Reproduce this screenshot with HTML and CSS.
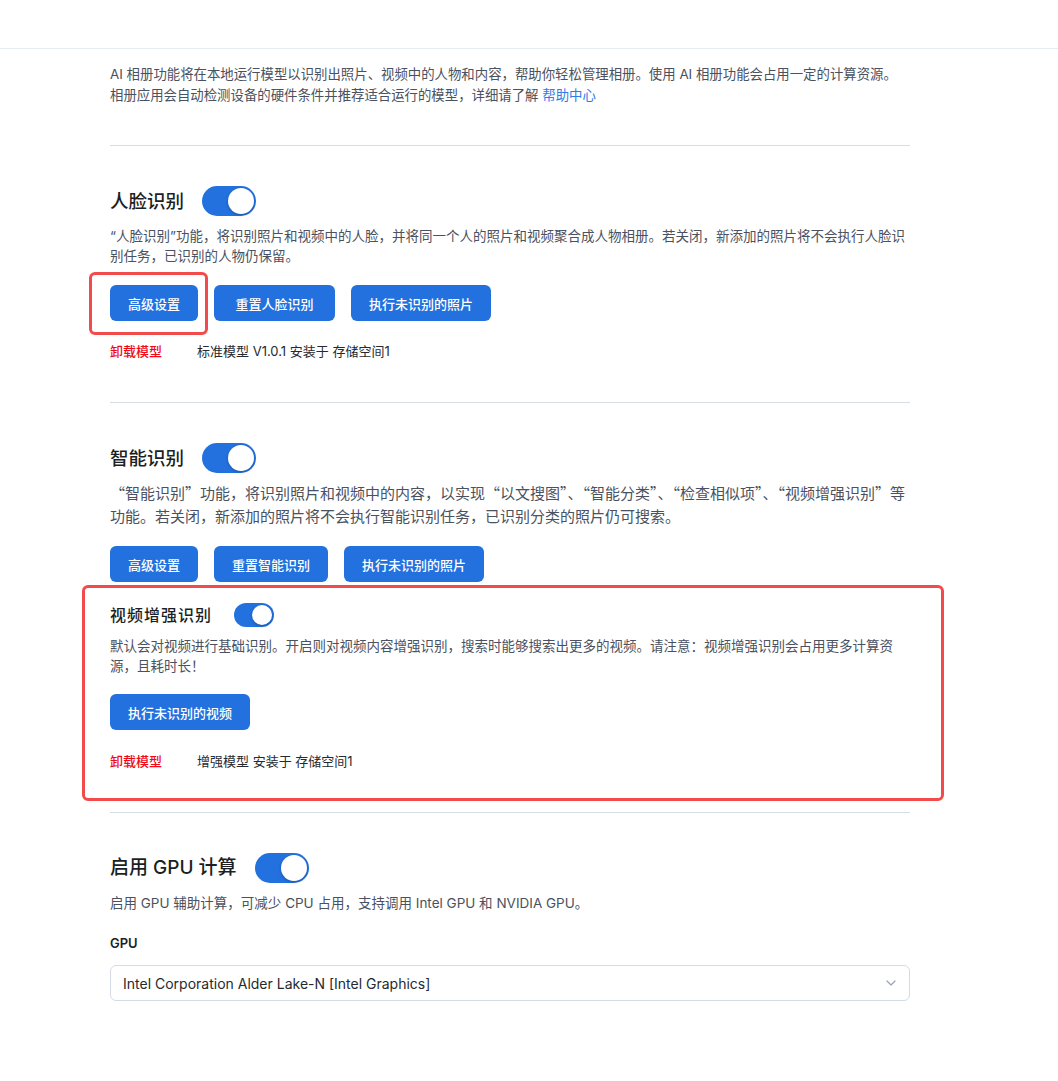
FILE: index.html
```html
<!DOCTYPE html>
<html lang="zh-CN">
<head>
    <meta charset="UTF-8">
    <meta name="viewport" content="width=device-width, initial-scale=1.0">
    <title>AI 相册设置</title>
    <link rel="stylesheet" href="styles.css">
</head>
<body>
    <div class="topbar"></div>

    <div class="main">
        <p class="intro">
            AI 相册功能将在本地运行模型以识别出照片、视频中的人物和内容，帮助你轻松管理相册。使用 AI 相册功能会占用一定的计算资源。<br>
            相册应用会自动检测设备的硬件条件并推荐适合运行的模型，详细请了解 <a href="#" class="link">帮助中心</a>
        </p>

        <!-- 人脸识别 -->
        <div class="section">
            <div class="section-head">
                <h2>人脸识别</h2>
                <span class="toggle on"><span class="knob"></span></span>
            </div>
            <p class="desc">“人脸识别”功能，将识别照片和视频中的人脸，并将同一个人的照片和视频聚合成人物相册。若关闭，新添加的照片将不会执行人脸识别任务，已识别的人物仍保留。</p>
            <div class="actions">
                <button class="btn">高级设置</button>
                <button class="btn btn-wide">重置人脸识别</button>
                <button class="btn">执行未识别的照片</button>
                <div class="mark mark-btn"></div>
            </div>
            <div class="model">
                <a href="#" class="unload">卸载模型</a>
                <span>标准模型 V1.0.1 安装于 存储空间1</span>
            </div>
        </div>

        <!-- 智能识别 -->
        <div class="section">
            <div class="section-head">
                <h2>智能识别</h2>
                <span class="toggle on"><span class="knob"></span></span>
            </div>
            <p class="desc desc-lg">“智能识别”功能，将识别照片和视频中的内容，以实现“以文搜图”、“智能分类”、“检查相似项”、“视频增强识别”等功能。若关闭，新添加的照片将不会执行智能识别任务，已识别分类的照片仍可搜索。</p>
            <div class="actions">
                <button class="btn">高级设置</button>
                <button class="btn">重置智能识别</button>
                <button class="btn">执行未识别的照片</button>
            </div>

            <div class="subsection">
                <div class="section-head sub-head">
                    <h3>视频增强识别</h3>
                    <span class="toggle small on"><span class="knob"></span></span>
                </div>
                <p class="desc desc-sub">默认会对视频进行基础识别。开启则对视频内容增强识别，搜索时能够搜索出更多的视频。请注意：视频增强识别会占用更多计算资源，且耗时长！</p>
                <div class="actions sub-actions">
                    <button class="btn">执行未识别的视频</button>
                </div>
                <div class="model sub-model">
                    <a href="#" class="unload">卸载模型</a>
                    <span>增强模型 安装于 存储空间1</span>
                </div>
                <div class="mark mark-sub"></div>
            </div>
        </div>

        <!-- GPU -->
        <div class="section">
            <div class="section-head">
                <h2 class="gpu-title">启用 GPU 计算</h2>
                <span class="toggle on"><span class="knob"></span></span>
            </div>
            <p class="desc">启用 GPU 辅助计算，可减少 CPU 占用，支持调用 Intel GPU 和 NVIDIA GPU。</p>
            <label class="field-label">GPU</label>
            <div class="select">
                <span>Intel Corporation Alder Lake-N [Intel Graphics]</span>
                <svg class="chevron" width="10" height="6" viewBox="0 0 10 6">
                    <path d="M1 1l4 4 4-4" fill="none" stroke="#9aa3b2" stroke-width="1.2" stroke-linecap="round" stroke-linejoin="round"/>
                </svg>
            </div>
        </div>
    </div>
</body>
</html>
```

FILE: styles.css
```css
body {
    margin: 0;
    font-family: Inter, "Noto Sans CJK SC", sans-serif;
    color: #1f2329;
    background-color: #fff;
}
.topbar {
    height: 48px;
    border-bottom: 1px solid #e6eaf1;
}
.main {
    width: 800px;
    margin-left: 110px;
    padding-top: 15px;
    padding-bottom: 80px;
}
.intro {
    margin: 0;
    font-size: 13.4px;
    line-height: 21px;
    color: #4a5160;
}
.link {
    color: #2f7ce8;
    text-decoration: none;
}
.section {
    border-top: 1px solid #d8dce3;
    margin-top: 39px;
    padding-top: 40px;
}
.section + .section {
    margin-top: 41px;
}
.section-head {
    display: flex;
    align-items: center;
    gap: 18px;
}
.section-head h2 {
    margin: 0;
    font-size: 18.5px;
    font-weight: 500;
    line-height: 30px;
    color: #1c1f24;
}
.section-head .gpu-title {
    font-size: 19px;
}
.sub-head {
    gap: 22px;
}
.section-head h3 {
    margin: 0;
    font-size: 16px;
    font-weight: 500;
    letter-spacing: 1px;
    line-height: 24px;
    color: #1c1f24;
}
.toggle {
    position: relative;
    display: inline-block;
    width: 54px;
    height: 30px;
    border-radius: 15px;
    background-color: #d0d5dd;
}
.toggle.on {
    background-color: #2271de;
}
.toggle .knob {
    position: absolute;
    top: 2px;
    right: 2px;
    width: 26px;
    height: 26px;
    border-radius: 50%;
    background-color: #fff;
    box-shadow: 0 1px 3px rgba(0,0,0,0.25);
}
.toggle.small {
    width: 40px;
    height: 24px;
    border-radius: 12px;
}
.toggle.small .knob {
    width: 20px;
    height: 20px;
}
.desc {
    margin: 10px 0 0;
    font-size: 13.5px;
    line-height: 20px;
    color: #4a5160;
}
.desc-lg {
    margin-top: 8px;
    font-family: "Noto Sans CJK SC", sans-serif;
    font-size: 15px;
    line-height: 23px;
}
.desc-sub {
    margin-top: 9px;
    font-size: 13.5px;
}
.actions {
    position: relative;
    display: flex;
    gap: 16px;
    margin-top: 19px;
}
.sub-actions {
    margin-top: 18px;
}
.btn {
    height: 36px;
    padding: 0 18px;
    border: none;
    border-radius: 6px;
    background-color: #2271de;
    color: #fff;
    font-family: inherit;
    font-size: 13px;
    font-weight: 500;
    cursor: pointer;
}
.btn:hover {
    background-color: #1b63c7;
}
.btn-wide {
    min-width: 121px;
}
.model {
    display: flex;
    margin-top: 20px;
    font-size: 13px;
    line-height: 20px;
    color: #262a30;
}
.sub-model {
    margin-top: 21px;
}
.unload {
    width: 87px;
    color: #ee0a16;
    font-weight: 500;
    text-decoration: none;
}
.subsection {
    position: relative;
    margin-top: 21px;
}
.mark {
    position: absolute;
    border: 3px solid #f24b4b;
    border-radius: 6px;
    pointer-events: none;
}
.mark-btn {
    left: -21px;
    top: -13px;
    width: 113px;
    height: 57px;
}
.mark-sub {
    left: -28px;
    top: -18px;
    width: 856px;
    height: 210px;
}
.field-label {
    display: block;
    margin-top: 20px;
    font-size: 13px;
    font-weight: 600;
    line-height: 20px;
    color: #1c1f24;
}
.select {
    display: flex;
    align-items: center;
    justify-content: space-between;
    height: 34px;
    margin-top: 12px;
    padding: 0 12px;
    border: 1px solid #d5dbe4;
    border-radius: 6px;
    font-size: 14px;
    color: #262a30;
}
.chevron {
    margin-right: 1px;
}
```
